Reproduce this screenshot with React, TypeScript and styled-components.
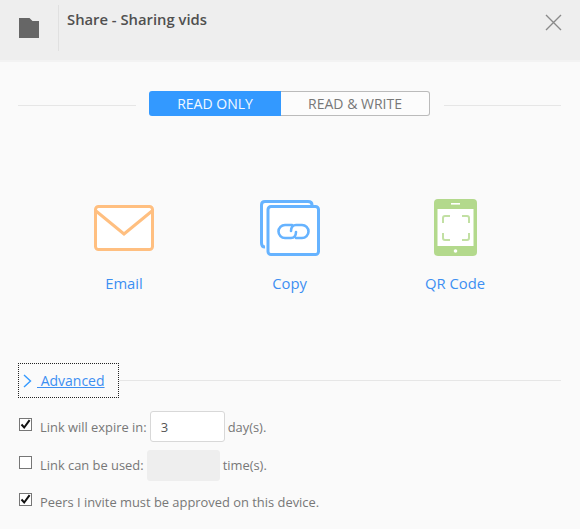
import React from "react";
import styled, { createGlobalStyle } from "styled-components";

const GlobalStyle = createGlobalStyle`
  html, body {
    margin: 0;
    padding: 0;
    background: #fafafa;
    font-family: "Open Sans", "Liberation Sans", sans-serif;
  }
`;

const Dialog = styled.div`
  width: 580px;
  height: 529px;
  overflow: hidden;
  background: #fafafa;
`;
const Header = styled.header`
  display: flex;
  height: 60px;
  padding-right: 18px;
  background: #eeeeee;
  border-bottom: 2px solid #f3f3f3;
`;
const FolderCell = styled.div`
  width: 59px;
  height: 46px;
  margin-top: 5px;
  display: flex;
  align-items: center;
  justify-content: center;
  box-sizing: border-box;
  border-right: 1px solid #e0e0e0;
`;
const Title = styled.h1`
  flex: 1;
  margin: 9px 0 0 8px;
  font-size: 14.8px;
  line-height: 20px;
  font-weight: 600;
  color: #505050;
`;
const CloseButton = styled.button`
  width: 17px;
  height: 17px;
  margin-top: 14px;
  padding: 0;
  border: 0;
  background: none;
  display: flex;
`;
const ModeRow = styled.div`
  display: flex;
  align-items: center;
  margin: 29px 19px 0 18px;
`;
const Rule = styled.div`
  flex: 1;
  height: 1px;
  background: #e6e6e6;
`;
const ModeRule = styled(Rule)`
  margin-top: 3px;
`;
const Toggle = styled.div`
  display: flex;
  width: 281px;
  height: 25px;
  margin: 0 13.5px;
`;
const ToggleOption = styled.div<{ $active?: boolean }>`
  display: flex;
  align-items: center;
  justify-content: center;
  box-sizing: border-box;
  width: ${(p) => (p.$active ? "132px" : "149px")};
  font-size: 14px;
  color: ${(p) => (p.$active ? "#f4f9ff" : "#777777")};
  background: ${(p) => (p.$active ? "#3399ff" : "#fcfcfc")};
  border: ${(p) => (p.$active ? "0" : "1px solid #bbbbbb")};
  border-left: 0;
  border-radius: ${(p) => (p.$active ? "3px 0 0 3px" : "0 3px 3px 0")};
`;
const Actions = styled.div`
  display: grid;
  grid-template-columns: repeat(3, 165.5px);
  margin: 83px 0 0 41.25px;
`;
const Action = styled.a`
  display: flex;
  flex-direction: column;
  align-items: center;
  font-size: 14.8px;
  line-height: 20px;
  color: #3d8ff2;
`;
const ActionIcon = styled.span`
  display: flex;
  align-items: center;
  justify-content: center;
  height: 58px;
  margin-bottom: 16px;
`;
const AdvancedRow = styled.div`
  display: flex;
  align-items: center;
  margin: 70px 19px 0 18px;
`;
const AdvancedToggle = styled.a`
  display: flex;
  align-items: center;
  gap: 5px;
  width: 101px;
  height: 35px;
  padding-left: 4px;
  box-sizing: border-box;
  border: 1px dotted #222222;
  font-size: 14px;
  color: #3d8ff2;
`;
const AdvancedLabel = styled.span`
  text-decoration: underline;
  white-space: pre;
`;
const Options = styled.div`
  display: flex;
  flex-direction: column;
  gap: 7.5px;
  margin: 13px 0 0 19px;
`;
const OptionRow = styled.label`
  display: flex;
  align-items: center;
  min-height: 28px;
  font-size: 12.9px;
  color: #777777;
`;
const Box = styled.span`
  display: flex;
  width: 13px;
  height: 13px;
  margin: -5px 8px 0 0;
  box-sizing: border-box;
  border: 1px solid #767676;
  background: #ffffff;
`;
const NumberField = styled.span<{ $disabled?: boolean }>`
  display: flex;
  align-items: center;
  box-sizing: border-box;
  width: ${(p) => (p.$disabled ? "73px" : "75px")};
  height: 31px;
  margin: 0 3px;
  padding-left: 10px;
  font-size: 13px;
  color: #555555;
  border-radius: 3px;
  background: ${(p) => (p.$disabled ? "#eeeeee" : "#ffffff")};
  border: 1px solid ${(p) => (p.$disabled ? "#eeeeee" : "#d8d8d8")};
`;

const Check = ({ checked }: { checked?: boolean }) => (
  <Box>
    {checked && (
      <svg width="11" height="11" viewBox="0 0 11 11">
        <path d="M1.5 5.5L4.2 8.5L9.6 1.2" fill="none" stroke="#111" strokeWidth="2" />
      </svg>
    )}
  </Box>
);

const FolderIcon = () => (
  <svg width="20" height="20" viewBox="0 0 20 20">
    <path d="M0 0H10.5L13.5 3H20V20H0Z" fill="#666666" />
  </svg>
);

const CloseIcon = () => (
  <svg width="17" height="17" viewBox="0 0 17 17">
    <path d="M1 1L16 16M16 1L1 16" stroke="#8a8a8a" strokeWidth="1.4" fill="none" />
  </svg>
);

const MailIcon = () => (
  <svg width="60" height="46" viewBox="0 0 60 46">
    <rect x="1.5" y="1.5" width="57" height="43" rx="3" fill="#fff" stroke="#ffbf80" strokeWidth="3" />
    <path d="M2 6L30 29L58 6" fill="none" stroke="#ffbf80" strokeWidth="3" />
  </svg>
);

const CopyIcon = () => (
  <svg width="60" height="56" viewBox="0 0 60 56">
    <path
      d="M5 47C2.5 47 1.5 45.5 1.5 43V5C1.5 2.5 2.5 1.5 5 1.5H48C50.5 1.5 52 2.5 52 5"
      fill="#fff"
      stroke="#66b3ff"
      strokeWidth="3"
    />
    <rect x="8" y="6.5" width="50.5" height="48" rx="3" fill="#fff" stroke="#66b3ff" strokeWidth="3" />
    <path
      d="M32 25H25A6.5 6.5 0 0 0 25 38H31C34 38 36 35.5 36 32M36 38H42A6.5 6.5 0 0 0 42 25H36C33 25 31 27.5 31 31"
      fill="none"
      stroke="#66b3ff"
      strokeWidth="2.6"
      strokeLinecap="round"
    />
  </svg>
);

const TabletIcon = () => (
  <svg width="44" height="58" viewBox="0 0 44 58">
    <rect x="1" y="0" width="43" height="57" rx="4" fill="#b3d98c" />
    <rect x="4.5" y="10" width="36" height="37" fill="#fff" />
    <rect x="18" y="4" width="9" height="1.6" fill="#fff" />
    <circle cx="22.5" cy="52" r="1.8" fill="#fff" />
    <path
      d="M10 24V19C10 18 11 17 12 17H17M29 17H34C35 17 36 18 36 19V24M36 34V39C36 40 35 41 34 41H29M17 41H12C11 41 10 40 10 39V34"
      fill="none"
      stroke="#c2e0a3"
      strokeWidth="2"
    />
  </svg>
);

const ChevronIcon = () => (
  <svg width="9" height="14" viewBox="0 0 9 14">
    <path d="M1 1L7.5 7L1 13" fill="none" stroke="#3399ff" strokeWidth="1.4" />
  </svg>
);

export default function App() {
  return (
    <Dialog>
      <GlobalStyle />
      <Header>
        <FolderCell>
          <FolderIcon />
        </FolderCell>
        <Title>Share - Sharing vids</Title>
        <CloseButton>
          <CloseIcon />
        </CloseButton>
      </Header>
      <ModeRow>
        <ModeRule />
        <Toggle>
          <ToggleOption $active>READ ONLY</ToggleOption>
          <ToggleOption>READ &amp; WRITE</ToggleOption>
        </Toggle>
        <ModeRule />
      </ModeRow>
      <Actions>
        <Action>
          <ActionIcon>
            <MailIcon />
          </ActionIcon>
          Email
        </Action>
        <Action>
          <ActionIcon>
            <CopyIcon />
          </ActionIcon>
          Copy
        </Action>
        <Action>
          <ActionIcon>
            <TabletIcon />
          </ActionIcon>
          QR Code
        </Action>
      </Actions>
      <AdvancedRow>
        <AdvancedToggle>
          <ChevronIcon />
          <AdvancedLabel> Advanced</AdvancedLabel>
        </AdvancedToggle>
        <Rule />
      </AdvancedRow>
      <Options>
        <OptionRow>
          <Check checked />
          Link will expire in:
          <NumberField>3</NumberField>
          day(s).
        </OptionRow>
        <OptionRow>
          <Check />
          Link can be used:
          <NumberField $disabled />
          time(s).
        </OptionRow>
        <OptionRow>
          <Check checked />
          Peers I invite must be approved on this device.
        </OptionRow>
      </Options>
    </Dialog>
  );
}
